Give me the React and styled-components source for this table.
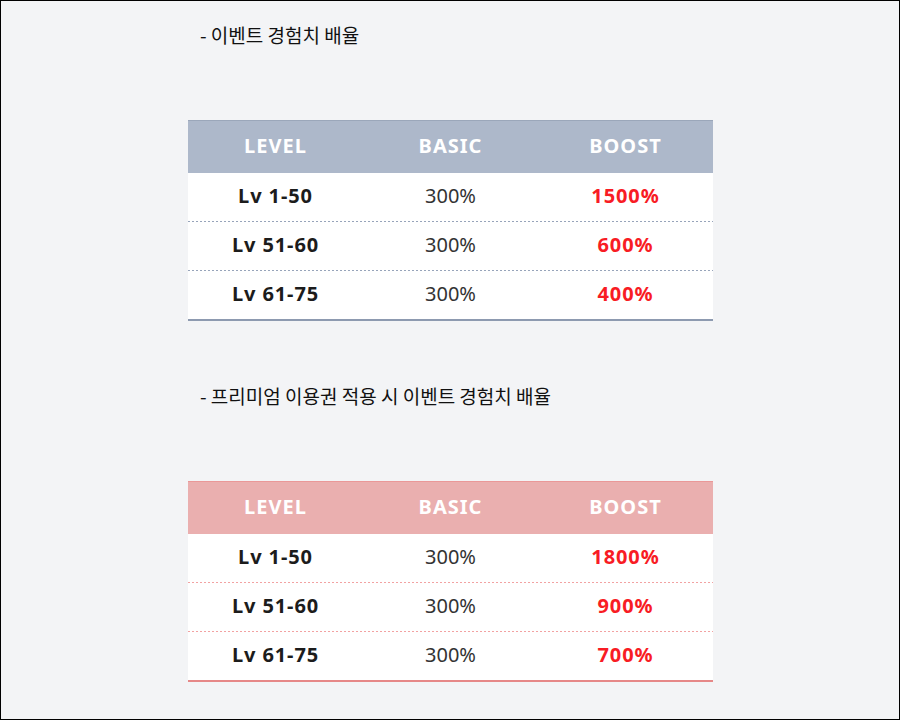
import React from "react";
import styled, { createGlobalStyle } from "styled-components";

const GlobalStyle = createGlobalStyle`
  html, body { margin: 0; padding: 0; }
  body {
    width: 900px;
    height: 720px;
    box-sizing: border-box;
    border: 1px solid #000;
    background: #f3f4f6;
    font-family: "Noto Sans", "Noto Sans CJK KR", sans-serif;
    overflow: hidden;
  }
`;

const palettes = {
  blue: { head: "#adb8ca", top: "#9ba7ba", bottom: "#8d9ab0", dot: "#97a4ba" },
  pink: { head: "#eaafaf", top: "#ea9898", bottom: "#e68888", dot: "#f2a2a2" },
};

const Page = styled.div`
  padding: 22px 0 0 187px;
  width: 525px;
  display: flex;
  flex-direction: column;
`;

const Title = styled.h2`
  margin: 0 0 73px;
  padding-left: 12px;
  font-family: "Noto Sans CJK KR", "Noto Sans", sans-serif;
  font-weight: 400;
  font-size: 19px;
  line-height: 24px;
  color: #111;
`;

const Table = styled.div`
  display: flex;
  flex-direction: column;
  border-top: 1px solid ${(p) => palettes[p.$tone].top};
  border-bottom: 2px solid ${(p) => palettes[p.$tone].bottom};
  margin-bottom: ${(p) => (p.$last ? "0" : "63px")};
  background: #fff;
`;

const Row = styled.div`
  display: grid;
  grid-template-columns: 1fr 1fr 1fr;
  align-items: center;
  box-sizing: border-box;
  padding-bottom: 4px;
  height: ${(p) => (p.$head ? "52px" : "48px")};
  background: ${(p) => (p.$head ? palettes[p.$tone].head : "#fff")};
  ${(p) =>
    p.$dotted
      ? `border-bottom: 1px solid transparent;
         background: linear-gradient(to right, ${palettes[p.$tone].dot} 50%, transparent 50%) left bottom / 4px 1px repeat-x border-box, #fff;
         height: 49px;`
      : ""}
`;

const HeadCell = styled.div`
  text-align: center;
  color: #fff;
  font-weight: 700;
  font-size: 20px;
  letter-spacing: 1px;
`;

const Cell = styled.div`
  text-align: center;
  font-size: 20px;
  font-weight: ${(p) => (p.$bold ? 700 : 400)};
  letter-spacing: ${(p) => (p.$bold ? "0.9px" : "0")};
  color: ${(p) => (p.$red ? "#f81c24" : p.$bold ? "#1c1c1c" : "#333")};
`;

const Rates = ({ tone, rows, last }) => (
  <Table $tone={tone} $last={last}>
    <Row $head $tone={tone}>
      <HeadCell>LEVEL</HeadCell>
      <HeadCell>BASIC</HeadCell>
      <HeadCell>BOOST</HeadCell>
    </Row>
    {rows.map((r, i) => (
      <Row key={r[0]} $tone={tone} $dotted={i < rows.length - 1}>
        <Cell $bold>{r[0]}</Cell>
        <Cell>{r[1]}</Cell>
        <Cell $bold $red>{r[2]}</Cell>
      </Row>
    ))}
  </Table>
);

export default function App() {
  return (
    <>
      <GlobalStyle />
      <Page>
        <Title>- 이벤트 경험치 배율</Title>
        <Rates
          tone="blue"
          rows={[
            ["Lv 1-50", "300%", "1500%"],
            ["Lv 51-60", "300%", "600%"],
            ["Lv 61-75", "300%", "400%"],
          ]}
        />
        <Title>- 프리미엄 이용권 적용 시 이벤트 경험치 배율</Title>
        <Rates
          tone="pink"
          last
          rows={[
            ["Lv 1-50", "300%", "1800%"],
            ["Lv 51-60", "300%", "900%"],
            ["Lv 61-75", "300%", "700%"],
          ]}
        />
      </Page>
    </>
  );
}
